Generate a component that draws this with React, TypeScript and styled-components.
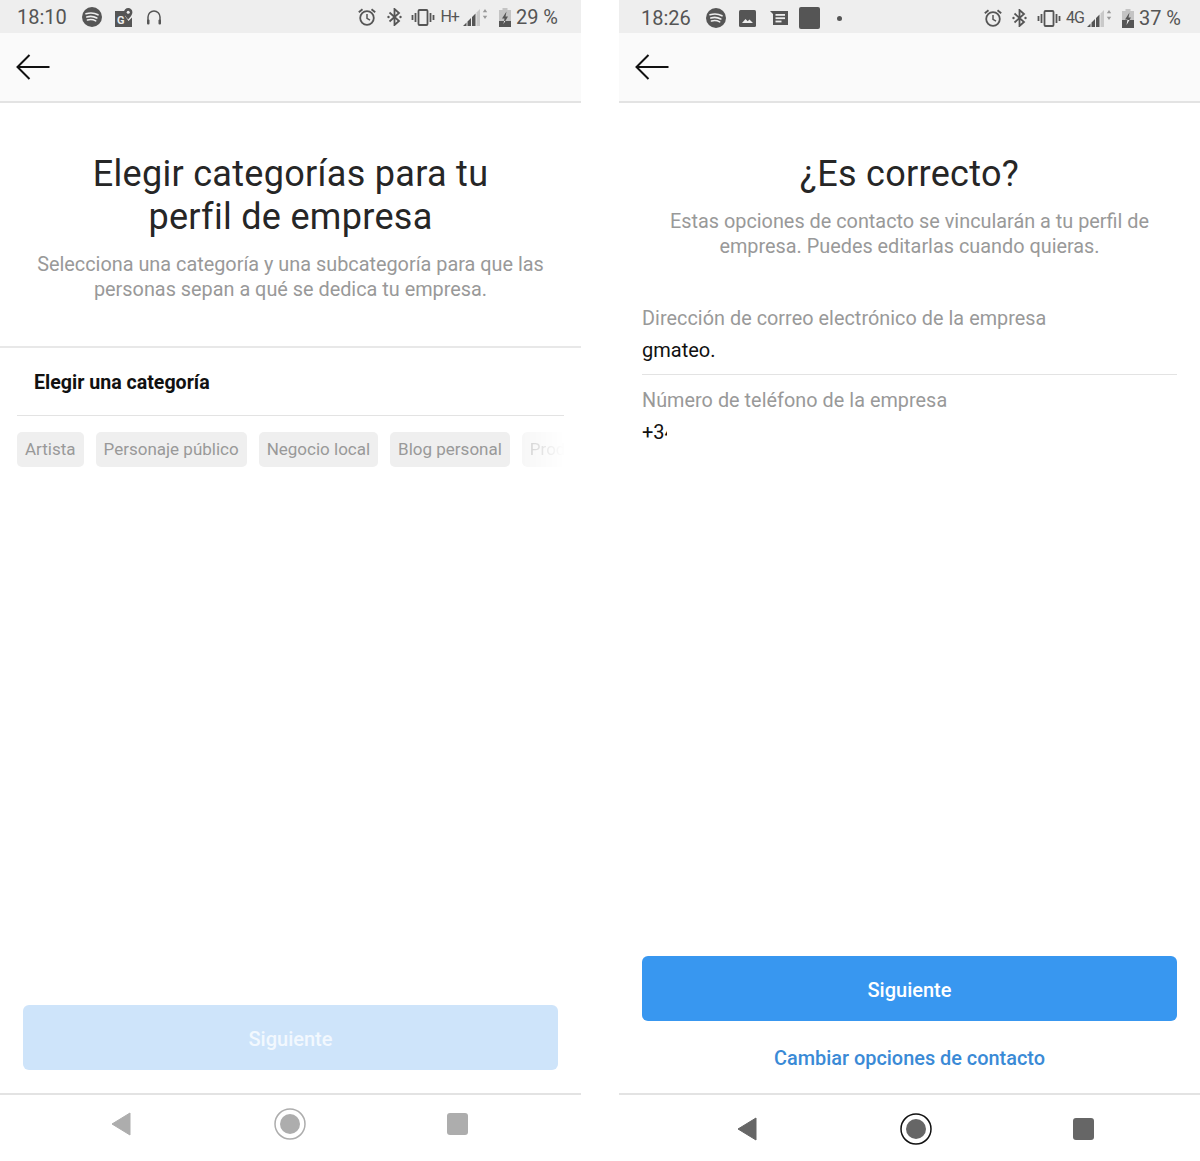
import styled, { createGlobalStyle } from "styled-components";

const GlobalStyle = createGlobalStyle`
  html, body {
    margin: 0;
    padding: 0;
    background: #fff;
  }

  * {
    box-sizing: border-box;
  }
`;

const Spotify = () => (
  <svg width="20" height="20" viewBox="0 0 20 20">
    <circle cx="10" cy="10" r="10" fill="#555" />
    <path
      d="M4 6.8c4-1.2 8.4-.9 12 1M4.8 10c3.4-1 7-.7 10 1M5.500 13c2.800-.8 5.800-.5 8.200.9"
      fill="none"
      stroke="#eee"
      strokeWidth="1.6"
      strokeLinecap="round"
    />
  </svg>
);

const MapsIcon = () => (
  <svg width="18" height="19" viewBox="0 0 18 19">
    <path d="M0 3h10v5l3.500 5 3.500-3.500V19H0z" fill="#555" />
    <path
      d="M13.200 0a4.200 4.200 0 0 0-4.200 4.200c0 3 4.200 7.300 4.200 7.300s4.200-4.300 4.200-7.300A4.200 4.200 0 0 0 13.200 0z"
      fill="#555"
    />
    <circle cx="13.2" cy="4.2" r="1.5" fill="#eee" />
    <text x="2" y="16" fontSize="11" fontWeight="700" fill="#eee" fontFamily="Roboto, sans-serif">
      G
    </text>
  </svg>
);

const Headphones = () => (
  <svg width="16" height="17" viewBox="0 0 16 17">
    <path d="M2 12V8a6 6 0 0 1 12 0v4" fill="none" stroke="#555" strokeWidth="1.5" />
    <rect x="1" y="10.5" width="2.5" height="5" rx="1" fill="#555" />
    <rect x="12.5" y="10.5" width="2.5" height="5" rx="1" fill="#555" />
  </svg>
);

const PictureIcon = () => (
  <svg width="17" height="17" viewBox="0 0 17 17">
    <rect width="17" height="17" rx="1.5" fill="#555" />
    <path d="M3 13l3.500-4 2.200 2.300 1.800-1.800L14 13z" fill="#eee" />
  </svg>
);

const NewsIcon = () => (
  <svg width="18" height="16" viewBox="0 0 18 16">
    <path d="M0 1h18v14H3V4z" fill="#555" />
    <rect x="5.5" y="4" width="9.5" height="1.8" fill="#eee" />
    <rect x="5.5" y="7.3" width="9.5" height="1.8" fill="#eee" />
    <rect x="5.5" y="10.6" width="6" height="1.8" fill="#eee" />
  </svg>
);

const Alarm = () => (
  <svg width="18" height="18" viewBox="0 0 18 18">
    <circle cx="9" cy="10" r="6.8" fill="none" stroke="#555" strokeWidth="1.8" />
    <path d="M9 6v4.300l3 1.800" fill="none" stroke="#555" strokeWidth="1.5" />
    <path d="M.8 4.300L4.500 1.200M17.200 4.300L13.500 1.200" stroke="#555" strokeWidth="1.8" />
  </svg>
);

const Bluetooth = () => (
  <svg width="15" height="18" viewBox="0 0 15 18">
    <path
      d="M2.500 4.500l9.500 8.500-4.500 4V1L12 5 2.500 13.500"
      fill="none"
      stroke="#555"
      strokeWidth="1.8"
    />
    <circle cx="1.5" cy="9" r="1.2" fill="#555" />
    <circle cx="13.5" cy="9" r="1.2" fill="#555" />
  </svg>
);

const Vibrate = () => (
  <svg width="24" height="17" viewBox="0 0 24 17">
    <rect x="7.5" y="1" width="9" height="15" rx="1" fill="none" stroke="#555" strokeWidth="1.8" />
    <path d="M4.500 4v9M1.500 6v5M19.500 4v9M22.500 6v5" stroke="#555" strokeWidth="1.8" />
  </svg>
);

const Signal = () => (
  <svg width="25" height="18" viewBox="0 0 25 18">
    <path d="M13.500 4.500L17 1v17h-3.500z" fill="#c9c9c9" />
    <path d="M0 18l3.500-3.500V18zM4.500 13.500L8 10v8H4.500zM9 9l3.500-3.500V18H9z" fill="#555" />
    <path d="M22 1l2.200 3.200h-4.400zM22 11l-2.200-3.200h4.400z" fill="#999" />
  </svg>
);

const Battery = ({ level }: { level: number }) => (
  <svg width="12" height="19" viewBox="0 0 12 19">
    <defs>
      <clipPath id={`battery-fill-${level}`}>
        <rect y={19 - level} width="12" height={level} />
      </clipPath>
    </defs>
    <path d="M3.500 0h5v2H12v17H0V2h3.500z" fill="#c4c4c4" />
    <rect y={19 - level} width="12" height={level} fill="#555" />
    <path d="M7.500 3.500L3 10.500h2.500L4.500 16 9 8.500H6.500z" fill="#555" />
    <path
      d="M7.500 3.500L3 10.500h2.500L4.500 16 9 8.500H6.500z"
      fill="#eee"
      clipPath={`url(#battery-fill-${level})`}
    />
  </svg>
);

const BackArrow = () => (
  <svg width="34" height="26" viewBox="0 0 34 26">
    <path d="M33.500 13H2M13.500 1L1.500 13l12 12" fill="none" stroke="#111" strokeWidth="2" />
  </svg>
);

const NavBack = ({ color }: { color: string }) => (
  <svg width="20" height="24" viewBox="0 0 20 24">
    <path d="M19 1v22L1 12z" fill={color} stroke={color} strokeLinejoin="round" />
  </svg>
);

const NavHome = ({ color, ring }: { color: string; ring: string }) => (
  <svg width="32" height="32" viewBox="0 0 32 32">
    <circle cx="16" cy="16" r="15" fill="none" stroke={ring} strokeWidth="1.5" />
    <circle cx="16" cy="16" r="10" fill={color} />
  </svg>
);

const Phone = styled.section`
  background: #fff;
  display: flex;
  flex-direction: column;
  height: 1161px;
  width: 581px;
`;

const StatusBar = styled.div<{ $left: number; $right: number; $top: number }>`
  align-items: center;
  background: #eeeeee;
  display: flex;
  flex-shrink: 0;
  height: 33px;
  justify-content: space-between;
  padding: ${(p) => p.$top}px ${(p) => p.$right}px 0 ${(p) => p.$left}px;
`;

const StatusGroup = styled.div`
  align-items: center;
  display: flex;
`;

const StatusSlot = styled.span<{ $ml: number }>`
  align-items: center;
  display: flex;
  margin-left: ${(p) => p.$ml}px;
`;

const StatusText = styled.span<{ $ml?: number }>`
  color: #555;
  font-family: Roboto, sans-serif;
  font-size: 20px;
  line-height: 1;
  margin-left: ${(p) => p.$ml ?? 0}px;
`;

const NetworkText = styled.span<{ $ml: number }>`
  color: #555;
  font-family: Roboto, sans-serif;
  font-size: 16px;
  letter-spacing: -1px;
  line-height: 1;
  margin-left: ${(p) => p.$ml}px;
`;

const GraySquare = styled.span`
  background: #555;
  border-radius: 2px;
  display: block;
  height: 22px;
  width: 21px;
`;

const Dot = styled.span`
  background: #555;
  border-radius: 50%;
  display: block;
  height: 5px;
  width: 5px;
`;

const Toolbar = styled.header`
  align-items: center;
  background: #fafafa;
  border-bottom: 2px solid #e3e3e3;
  display: flex;
  flex-shrink: 0;
  height: 70px;
  padding-left: 16px;
`;

const Intro = styled.div`
  padding: 50px 30px 0;
  text-align: center;
`;

const Title = styled.h1`
  color: #262626;
  font-family: Roboto, sans-serif;
  font-size: 36px;
  font-weight: 400;
  letter-spacing: 0.3px;
  line-height: 43px;
  margin: 0;
  padding: 0 50px;
`;

const Subtitle = styled.p`
  color: #999;
  font-family: Roboto, sans-serif;
  font-size: 19.85px;
  font-weight: 400;
  line-height: 25px;
  margin: 13px -10px 0;
`;

const Body = styled.div`
  display: flex;
  flex: 1;
  flex-direction: column;
`;

const SectionHead = styled.div`
  border-top: 2px solid #e8e8e8;
  margin-top: 44px;
  padding: 0 17px;
`;

const SectionTitle = styled.h2`
  border-bottom: 1px solid #e3e3e3;
  color: #111;
  font-family: Roboto, sans-serif;
  font-size: 19.6px;
  font-weight: 700;
  height: 68px;
  line-height: 69px;
  margin: 0;
  padding-left: 17px;
`;

const ChipRow = styled.div`
  display: flex;
  gap: 12px;
  margin: 16px 17px 0;
  overflow: hidden;
`;

const Chip = styled.span<{ $faded?: boolean }>`
  background: #efefef;
  border-radius: 5px;
  color: #999;
  flex-shrink: 0;
  font-family: Roboto, sans-serif;
  font-size: 17px;
  height: 35px;
  line-height: 35px;
  padding: 0 8px;
  ${(p) =>
    p.$faded &&
    `
    -webkit-mask-image: linear-gradient(to right, rgba(0, 0, 0, 0.5), transparent 43px);
    mask-image: linear-gradient(to right, rgba(0, 0, 0, 0.5), transparent 43px);
  `}
`;

const Fields = styled.div`
  padding-top: 47px;
`;

const Field = styled.div<{ $line?: boolean }>`
  border-bottom: ${(p) => (p.$line ? "1px solid #e3e3e3" : "none")};
  height: 69px;
  margin: 0 23px 13px;
`;

const FieldLabel = styled.div`
  color: #999;
  font-family: Roboto, sans-serif;
  font-size: 19.8px;
  letter-spacing: 0.05px;
  line-height: 26px;
`;

const FieldValue = styled.div`
  color: #111;
  font-family: Roboto, sans-serif;
  font-size: 20px;
  line-height: 26px;
  margin-top: 5px;
`;

const Cut = styled.span`
  display: block;
  overflow: hidden;
  white-space: nowrap;
  width: 25px;
`;

const Actions = styled.div<{ $pad: number }>`
  margin-top: auto;
  padding: 0 23px ${(p) => p.$pad}px;
`;

const NextButton = styled.button<{ $disabled?: boolean }>`
  background: ${(p) => (p.$disabled ? "#cee4fa" : "#3897f0")};
  border: 0;
  border-radius: 6px;
  color: ${(p) => (p.$disabled ? "#f2f8fe" : "#fff")};
  display: block;
  font-family: Roboto, sans-serif;
  font-size: 20px;
  font-weight: 500;
  height: 65px;
  padding: 3px 0 0;
  width: 100%;
`;

const ContactLink = styled.a`
  color: #3a8ad6;
  display: block;
  font-family: Roboto, sans-serif;
  font-size: 19.9px;
  font-weight: 500;
  line-height: 26px;
  margin-top: 25px;
  text-align: center;
`;

const NavBar = styled.nav<{ $left: number; $top: number }>`
  align-items: flex-start;
  border-top: 2px solid #e3e3e3;
  display: flex;
  flex-shrink: 0;
  gap: 142px;
  height: 68px;
  padding-left: ${(p) => p.$left}px;
  padding-top: ${(p) => p.$top}px;
`;

const NavSquare = styled.span<{ $color: string }>`
  background: ${(p) => p.$color};
  border-radius: 3px;
  display: block;
  height: 22px;
  margin: 5px 0 0 -1px;
  width: 21px;
`;

const NavTriangle = styled.span`
  display: block;
  margin: 4px 1px 0 0;
`;

const Page = styled.main`
  display: flex;
  justify-content: space-between;
  width: 1200px;
`;

const CHIPS = ["Artista", "Personaje público", "Negocio local", "Blog personal"];

const App = () => {
  return (
    <>
      <GlobalStyle />
      <Page>
        <Phone>
          <StatusBar $left={17} $right={23} $top={1}>
            <StatusGroup>
              <StatusText>18:10</StatusText>
              <StatusSlot $ml={15}><Spotify /></StatusSlot>
              <StatusSlot $ml={13}><MapsIcon /></StatusSlot>
              <StatusSlot $ml={13}><Headphones /></StatusSlot>
            </StatusGroup>
            <StatusGroup>
              <StatusSlot $ml={0}><Alarm /></StatusSlot>
              <StatusSlot $ml={11}><Bluetooth /></StatusSlot>
              <StatusSlot $ml={9}><Vibrate /></StatusSlot>
              <NetworkText $ml={5}>H+</NetworkText>
              <StatusSlot $ml={4}><Signal /></StatusSlot>
              <StatusSlot $ml={11}><Battery level={6} /></StatusSlot>
              <StatusText $ml={5}>29 %</StatusText>
            </StatusGroup>
          </StatusBar>
          <Toolbar>
            <BackArrow />
          </Toolbar>
          <Body>
            <Intro>
              <Title>Elegir categorías para tu perfil de empresa</Title>
              <Subtitle>
                Selecciona una categoría y una subcategoría para que las
                personas sepan a qué se dedica tu empresa.
              </Subtitle>
            </Intro>
            <SectionHead>
              <SectionTitle>Elegir una categoría</SectionTitle>
            </SectionHead>
            <ChipRow>
              {CHIPS.map((c) => (
                <Chip key={c}>{c}</Chip>
              ))}
              <Chip $faded>Producto</Chip>
            </ChipRow>
            <Actions $pad={23}>
              <NextButton $disabled>Siguiente</NextButton>
            </Actions>
          </Body>
          <NavBar $left={111} $top={13}>
            <NavTriangle><NavBack color="#adadad" /></NavTriangle>
            <NavHome color="#adadad" ring="#adadad" />
            <NavSquare $color="#adadad" />
          </NavBar>
        </Phone>

        <Phone>
          <StatusBar $left={22} $right={19} $top={3}>
            <StatusGroup>
              <StatusText>18:26</StatusText>
              <StatusSlot $ml={15}><Spotify /></StatusSlot>
              <StatusSlot $ml={13}><PictureIcon /></StatusSlot>
              <StatusSlot $ml={14}><NewsIcon /></StatusSlot>
              <StatusSlot $ml={11}><GraySquare /></StatusSlot>
              <StatusSlot $ml={17}><Dot /></StatusSlot>
            </StatusGroup>
            <StatusGroup>
              <StatusSlot $ml={0}><Alarm /></StatusSlot>
              <StatusSlot $ml={10}><Bluetooth /></StatusSlot>
              <StatusSlot $ml={10}><Vibrate /></StatusSlot>
              <NetworkText $ml={5}>4G</NetworkText>
              <StatusSlot $ml={3}><Signal /></StatusSlot>
              <StatusSlot $ml={10}><Battery level={8} /></StatusSlot>
              <StatusText $ml={5}>37 %</StatusText>
            </StatusGroup>
          </StatusBar>
          <Toolbar>
            <BackArrow />
          </Toolbar>
          <Body>
            <Intro>
              <Title>¿Es correcto?</Title>
              <Subtitle>
                Estas opciones de contacto se vincularán a tu perfil de
                empresa. Puedes editarlas cuando quieras.
              </Subtitle>
            </Intro>
            <Fields>
              <Field $line>
                <FieldLabel>Dirección de correo electrónico de la empresa</FieldLabel>
                <FieldValue>gmateo.</FieldValue>
              </Field>
              <Field>
                <FieldLabel>Número de teléfono de la empresa</FieldLabel>
                <FieldValue><Cut>+34</Cut></FieldValue>
              </Field>
            </Fields>
            <Actions $pad={21}>
              <NextButton>Siguiente</NextButton>
              <ContactLink>Cambiar opciones de contacto</ContactLink>
            </Actions>
          </Body>
          <NavBar $left={118} $top={18}>
            <NavTriangle><NavBack color="#666" /></NavTriangle>
            <NavHome color="#666" ring="#111" />
            <NavSquare $color="#666" />
          </NavBar>
        </Phone>
      </Page>
    </>
  );
};

export default App;
